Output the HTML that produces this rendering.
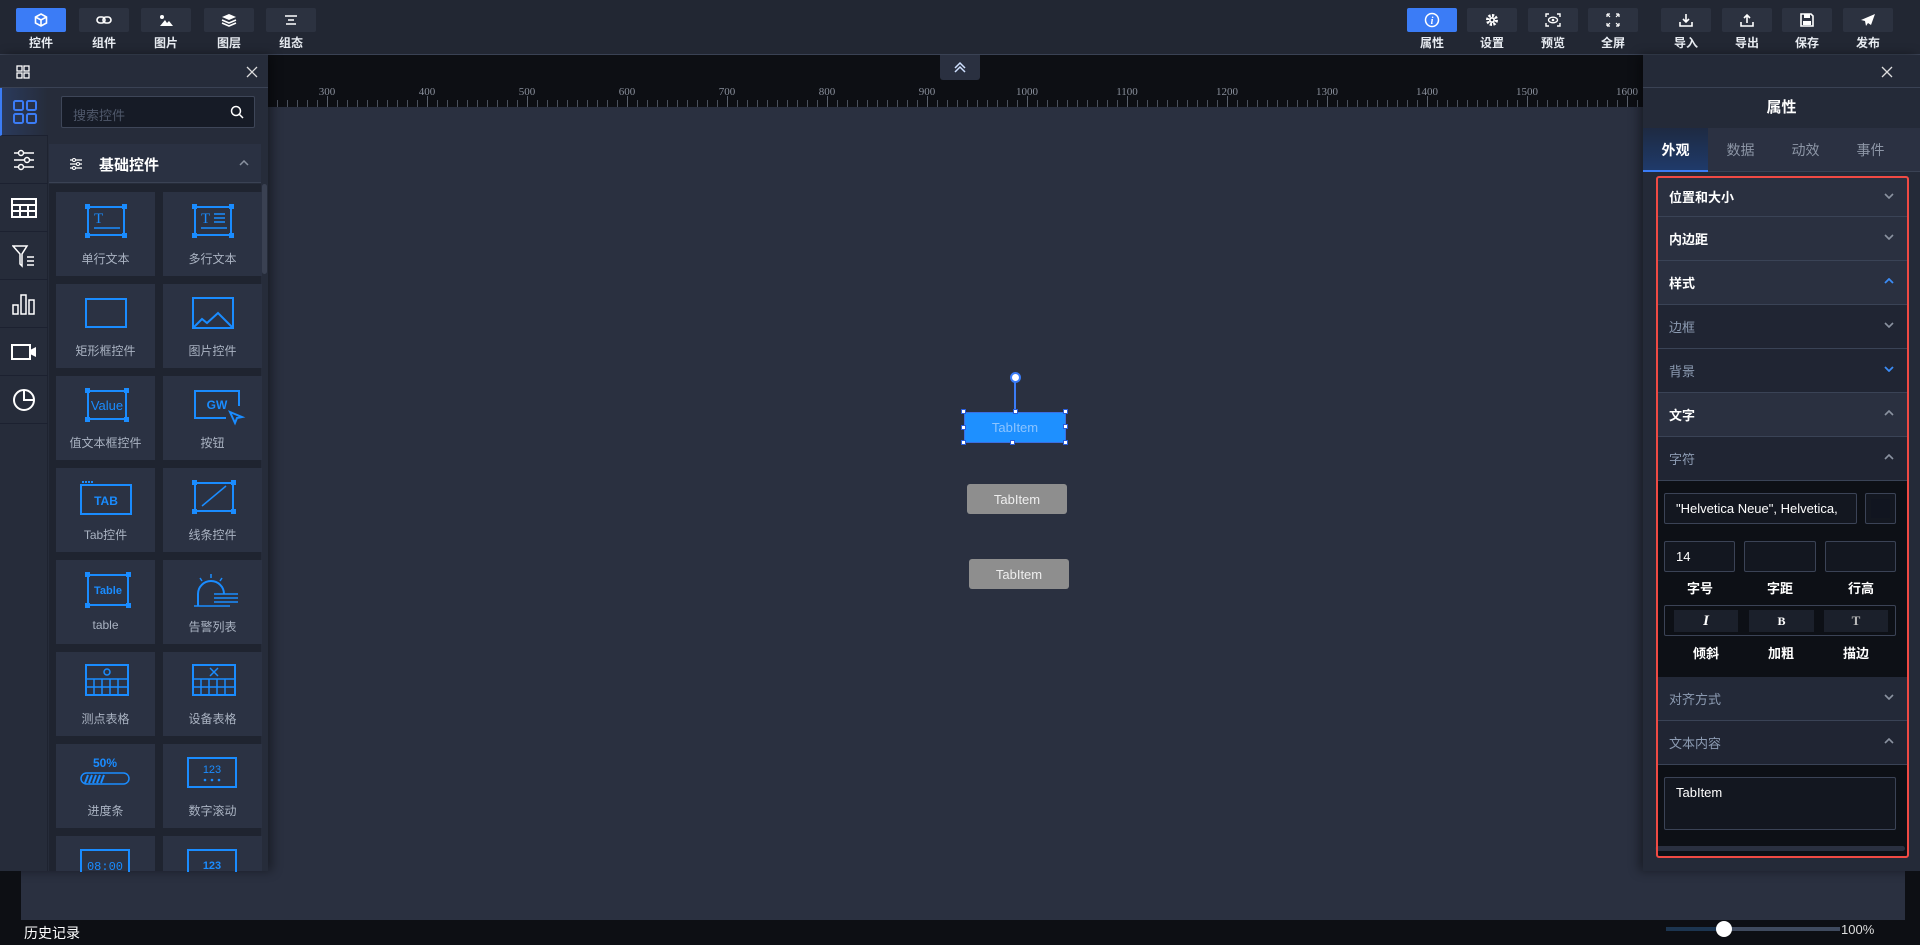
<!DOCTYPE html>
<html><head><meta charset="utf-8"><style>
*{box-sizing:border-box;margin:0;padding:0}
body{width:1920px;height:945px;overflow:hidden;background:#0d0f15;font-family:"Liberation Sans","Noto Sans CJK SC",sans-serif;color:#fff;position:relative}
.abs{position:absolute}
.top{left:0;top:0;width:1920px;height:55px;background:#222733;border-bottom:1px solid #3a4254}
.tb{position:absolute;top:8px;width:50px;height:24px;background:#2c3240;border-radius:2px;display:flex;align-items:center;justify-content:center}
.tb.on{background:#3b7cf6}
.tl{position:absolute;top:34px;width:50px;text-align:center;font-size:12px;font-weight:bold;color:#e8ecf2}
.canvas{left:21px;top:107px;width:1884px;height:813px;background:#2a3040}
.ruler{left:268px;top:55px;width:1375px;height:52px;background:#0d0f14;overflow:hidden}
.ruler span{position:absolute;top:31px;font-family:"Liberation Serif",serif;font-size:11px;color:#8a909c;transform:translateX(-50%)}
.lp{left:0;top:55px;width:268px;height:816px;background:#262c3a;box-shadow:4px 0 10px rgba(0,0,0,.4)}
.icol{position:absolute;left:0;top:33px;width:48px;height:783px;background:#262c3a;border-right:1px solid #1e2330}
.irow{position:absolute;left:0;width:48px;height:48px;border-bottom:1px solid #1c2130;display:flex;align-items:center;justify-content:center}
.card{position:absolute;width:99px;height:84px;background:#2b3243;text-align:center}
.card .lb{position:absolute;left:0;right:0;top:58px;font-size:12px;color:#aab3c2}
.card svg{position:absolute;left:29px;top:12px}
.rp{left:1643px;top:55px;width:277px;height:816px;background:#242a38;box-shadow:-4px 0 10px rgba(0,0,0,.4)}
.row{position:absolute;left:1657px;width:251px;height:44px;border-bottom:1px solid #3a4356;font-size:13px;display:flex;align-items:center;padding-left:12px}
.row.b{background:#2a3040;font-weight:bold;color:#fff}
.row.s{background:#202533;color:#8c9bb2}
.chev{position:absolute;right:14px;top:17px}
.inp{position:absolute;background:#131720;border:1px solid #3b4356;border-radius:2px}
.lab{position:absolute;font-size:13px;font-weight:bold;width:72px;text-align:center}
.cv-btn{position:absolute;background:#8e8e8e;border-radius:3px;color:#eee;font-size:13px;display:flex;align-items:center;justify-content:center}
.h{position:absolute;width:5px;height:5px;background:#fff;border:1px solid #2a5dd8}
</style></head><body>
<div class="abs canvas"></div>
<div class="abs ruler">
<span style="left:59px">300</span><span style="left:159px">400</span><span style="left:259px">500</span><span style="left:359px">600</span><span style="left:459px">700</span><span style="left:559px">800</span><span style="left:659px">900</span><span style="left:759px">1000</span><span style="left:859px">1100</span><span style="left:959px">1200</span><span style="left:1059px">1300</span><span style="left:1159px">1400</span><span style="left:1259px">1500</span><span style="left:1359px">1600</span>
<div style="position:absolute;left:0;top:45px;width:1375px;height:7px;background:repeating-linear-gradient(90deg,transparent 0 9px,#4a505c 9px 10px)"></div>
<div style="position:absolute;left:0;top:41px;width:1375px;height:11px;background:repeating-linear-gradient(90deg,transparent 0 59px,#5a606c 59px 60px,transparent 60px 100px)"></div>
</div>
<div class="abs" style="left:940px;top:55px;width:40px;height:25px;background:#2a3040;border-radius:0 0 3px 3px;text-align:center"><svg width="16" height="14" style="margin-top:5px"><path d="M3 8l5-5 5 5M3 12l5-5 5 5" stroke="#cfe0ff" stroke-width="1.5" fill="none"/></svg></div>

<div class="abs" style="left:1014px;top:382px;width:2px;height:30px;background:#3b7cf6"></div>
<div class="abs" style="left:1010px;top:372px;width:11px;height:11px;border-radius:50%;background:#fff;border:2px solid #3b7cf6"></div>
<div class="abs" style="left:964px;top:412px;width:102px;height:31px;background:#1e90ff;border:1px solid #3b6ee0;color:#8cc4ff;font-size:13px;display:flex;align-items:center;justify-content:center">TabItem</div>
<div class="h" style="left:961px;top:409px"></div><div class="h" style="left:1013px;top:409px"></div><div class="h" style="left:1063px;top:409px"></div>
<div class="h" style="left:961px;top:425px"></div><div class="h" style="left:1063px;top:424px"></div>
<div class="h" style="left:961px;top:440px"></div><div class="h" style="left:1010px;top:440px"></div><div class="h" style="left:1063px;top:440px"></div>
<div class="cv-btn" style="left:967px;top:484px;width:100px;height:30px">TabItem</div>
<div class="cv-btn" style="left:969px;top:559px;width:100px;height:30px">TabItem</div>

<div class="abs top">
<div class="tb on" style="left:16px"><svg width="14" height="14" viewBox="0 0 14 14"><path d="M7 1l5.5 3v6L7 13 1.5 10V4zM1.5 4L7 7l5.5-3M7 7v6" stroke="#fff" stroke-width="1.6" fill="none"/></svg></div><div class="tl" style="left:16px">控件</div>
<div class="tb" style="left:79px"><svg width="16" height="10"><rect x="1" y="2" width="8" height="6" rx="3" stroke="#fff" stroke-width="1.6" fill="none"/><rect x="7" y="2" width="8" height="6" rx="3" stroke="#fff" stroke-width="1.6" fill="none"/></svg></div><div class="tl" style="left:79px">组件</div>
<div class="tb" style="left:141px"><svg width="14" height="12"><circle cx="3" cy="3" r="2" fill="#fff"/><path d="M1 12l5-6 2 3 2-2 4 5z" fill="#fff"/></svg></div><div class="tl" style="left:141px">图片</div>
<div class="tb" style="left:204px"><svg width="16" height="14"><path d="M8 1l7 3-7 3-7-3z" fill="#fff"/><path d="M1 7l7 3 7-3M1 10l7 3 7-3" stroke="#fff" stroke-width="1.5" fill="none"/></svg></div><div class="tl" style="left:204px">图层</div>
<div class="tb" style="left:266px"><svg width="14" height="10"><path d="M1 1h12M4 5h6M2 9h10" stroke="#fff" stroke-width="1.5"/></svg></div><div class="tl" style="left:266px">组态</div>

<div class="tb on" style="left:1407px"><svg width="16" height="16"><circle cx="8" cy="8" r="6.5" stroke="#fff" stroke-width="1.5" fill="none"/><text x="8" y="12" font-size="10" font-style="italic" font-weight="bold" fill="#fff" text-anchor="middle" font-family="Liberation Serif">i</text></svg></div><div class="tl" style="left:1407px">属性</div>
<div class="tb" style="left:1467px"><svg width="14" height="14"><circle cx="7" cy="7" r="4.5" fill="none" stroke="#fff" stroke-width="3" stroke-dasharray="2.2 1.3"/><circle cx="7" cy="7" r="3" fill="#fff"/><circle cx="7" cy="7" r="1.3" fill="#2c3240"/></svg></div><div class="tl" style="left:1467px">设置</div>
<div class="tb" style="left:1528px"><svg width="16" height="14"><path d="M1 4V1h3M12 1h3v3M15 10v3h-3M4 13H1v-3" stroke="#fff" stroke-width="1.4" fill="none"/><ellipse cx="8" cy="7" rx="4.5" ry="2.8" stroke="#fff" stroke-width="1.3" fill="none"/><circle cx="8" cy="7" r="1.3" fill="#fff"/></svg></div><div class="tl" style="left:1528px">预览</div>
<div class="tb" style="left:1588px"><svg width="14" height="14"><path d="M1 1l3 3M1 1h3M1 1v3M13 1l-3 3M13 1h-3M13 1v3M1 13l3-3M1 13h3M1 13v-3M13 13l-3-3M13 13h-3M13 13v-3" stroke="#fff" stroke-width="1.2" fill="none"/></svg></div><div class="tl" style="left:1588px">全屏</div>
<div class="tb" style="left:1661px"><svg width="14" height="14"><path d="M7 1v8M4 6l3 3 3-3M1 9v4h12V9" stroke="#fff" stroke-width="1.6" fill="none"/></svg></div><div class="tl" style="left:1661px">导入</div>
<div class="tb" style="left:1722px"><svg width="14" height="14"><path d="M7 10V2M4 5l3-3 3 3M1 9v4h12V9" stroke="#fff" stroke-width="1.6" fill="none"/></svg></div><div class="tl" style="left:1722px">导出</div>
<div class="tb" style="left:1782px"><svg width="14" height="14"><path d="M1 1h10l2 2v10H1z" stroke="#fff" stroke-width="1.6" fill="none"/><rect x="4" y="1" width="6" height="4" fill="#fff"/><rect x="3" y="8" width="8" height="4" fill="#fff"/></svg></div><div class="tl" style="left:1782px">保存</div>
<div class="tb" style="left:1843px"><svg width="16" height="14"><path d="M15 1L1 7l4 1 1 5 2-3 3 2z" fill="#fff"/></svg></div><div class="tl" style="left:1843px">发布</div>
</div>

<div class="abs lp">
<div style="position:absolute;left:0;top:0;width:268px;height:33px;border-bottom:1px solid #3a4254"></div>
<svg width="14" height="14" style="position:absolute;left:16px;top:10px"><rect x="1" y="1" width="5" height="5" stroke="#fff" fill="none" stroke-width="1.3"/><rect x="8" y="1" width="5" height="5" stroke="#fff" fill="none" stroke-width="1.3"/><rect x="1" y="8" width="5" height="5" stroke="#fff" fill="none" stroke-width="1.3"/><rect x="8" y="8" width="5" height="5" stroke="#fff" fill="none" stroke-width="1.3"/></svg>
<svg width="12" height="12" style="position:absolute;left:246px;top:11px"><path d="M1 1l10 10M11 1L1 11" stroke="#ddd" stroke-width="1.3"/></svg>
<div class="icol">
<div class="irow" style="top:0;background:linear-gradient(90deg,#2a3a5c,#262c3a);border-left:2px solid #3b7cf6"><svg width="24" height="24"><rect x="1" y="1" width="9" height="9" rx="1.5" stroke="#3b7cf6" stroke-width="2" fill="none"/><rect x="14" y="1" width="9" height="9" rx="1.5" stroke="#3b7cf6" stroke-width="2" fill="none"/><rect x="1" y="14" width="9" height="9" rx="1.5" stroke="#3b7cf6" stroke-width="2" fill="none"/><rect x="14" y="14" width="9" height="9" rx="1.5" stroke="#3b7cf6" stroke-width="2" fill="none"/></svg></div>
<div class="irow" style="top:48px"><svg width="22" height="22"><path d="M1 4h20M1 11h20M1 18h20" stroke="#fff" stroke-width="1.5"/><circle cx="8" cy="4" r="2.5" fill="#262c3a" stroke="#fff" stroke-width="1.5"/><circle cx="14" cy="11" r="2.5" fill="#262c3a" stroke="#fff" stroke-width="1.5"/><circle cx="8" cy="18" r="2.5" fill="#262c3a" stroke="#fff" stroke-width="1.5"/></svg></div>
<div class="irow" style="top:96px"><svg width="26" height="20"><rect x="1" y="1" width="24" height="18" stroke="#fff" stroke-width="2" fill="none"/><path d="M1 7h24M1 13h24M9 7v12M17 7v12" stroke="#fff" stroke-width="2"/></svg></div>
<div class="irow" style="top:144px"><svg width="24" height="24"><path d="M1 2h14l-5 8v12l-2-2V10z" stroke="#fff" stroke-width="1.5" fill="none"/><path d="M15 13h7M15 17h7M15 21h7" stroke="#fff" stroke-width="1.5"/></svg></div>
<div class="irow" style="top:192px"><svg width="24" height="22"><rect x="1" y="12" width="5" height="9" stroke="#fff" stroke-width="1.5" fill="none"/><rect x="9" y="2" width="5" height="19" stroke="#fff" stroke-width="1.5" fill="none"/><rect x="17" y="7" width="5" height="14" stroke="#fff" stroke-width="1.5" fill="none"/></svg></div>
<div class="irow" style="top:240px"><svg width="26" height="18"><rect x="1" y="2" width="18" height="14" stroke="#fff" stroke-width="2" fill="none"/><path d="M19 7l6-3v10l-6-3z" fill="#fff"/></svg></div>
<div class="irow" style="top:288px"><svg width="24" height="24"><circle cx="12" cy="12" r="10" stroke="#fff" stroke-width="2" fill="none"/><path d="M12 2v10h10" stroke="#fff" stroke-width="2" fill="none"/></svg></div>
</div>
<div style="position:absolute;left:61px;top:41px;width:194px;height:32px;background:#161b26;border:1px solid #3e4658;border-radius:2px;font-size:13px;color:#4f586a;padding:8px 11px">搜索控件
<svg width="14" height="14" style="position:absolute;right:10px;top:8px"><circle cx="6" cy="6" r="4.5" stroke="#fff" stroke-width="1.5" fill="none"/><path d="M9.5 9.5l3.5 3.5" stroke="#fff" stroke-width="1.5"/></svg></div>
<div style="position:absolute;left:49px;top:89px;width:212px;height:39px;background:#2a3142;border-bottom:1px solid #3a4254;font-size:15px;font-weight:bold;padding:10px 0 0 50px">基础控件
<svg width="14" height="12" style="position:absolute;left:20px;top:14px"><path d="M1 2h12M1 6h12M1 10h12" stroke="#fff" stroke-width="1.2"/><circle cx="5" cy="2" r="1.5" fill="#2a3142" stroke="#fff"/><circle cx="9" cy="6" r="1.5" fill="#2a3142" stroke="#fff"/><circle cx="5" cy="10" r="1.5" fill="#2a3142" stroke="#fff"/></svg>
<svg width="10" height="6" style="position:absolute;left:190px;top:16px"><path d="M1 5l4-4 4 4" stroke="#8a92a0" stroke-width="1.5" fill="none"/></svg></div>
<div style="position:absolute;left:49px;top:129px;width:212px;height:687px;background:#1f2430"></div>
<div style="position:absolute;left:262px;top:129px;width:5px;height:90px;background:#3a4152;border-radius:3px"></div>
</div>
<div class="card" style="left:56px;top:192px"><svg width="42" height="34"><rect x="3" y="3" width="36" height="28" stroke="#1a8cff" stroke-width="2" fill="none"/><rect x="0" y="0" width="5" height="5" fill="#1a8cff"/><rect x="37" y="0" width="5" height="5" fill="#1a8cff"/><rect x="0" y="29" width="5" height="5" fill="#1a8cff"/><rect x="37" y="29" width="5" height="5" fill="#1a8cff"/><text x="9" y="19" font-family="Liberation Serif" font-size="15" fill="#1a8cff">T</text><path d="M9 24h26" stroke="#1a8cff" stroke-width="1.5"/></svg><div class="lb">单行文本</div></div>
<div class="card" style="left:163px;top:192px"><svg width="42" height="34"><rect x="3" y="3" width="36" height="28" stroke="#1a8cff" stroke-width="2" fill="none"/><rect x="0" y="0" width="5" height="5" fill="#1a8cff"/><rect x="37" y="0" width="5" height="5" fill="#1a8cff"/><rect x="0" y="29" width="5" height="5" fill="#1a8cff"/><rect x="37" y="29" width="5" height="5" fill="#1a8cff"/><text x="9" y="19" font-family="Liberation Serif" font-size="15" fill="#1a8cff">T</text><path d="M22 10h11M22 14h11M22 18h11M9 24h26" stroke="#1a8cff" stroke-width="1.5"/></svg><div class="lb">多行文本</div></div>
<div class="card" style="left:56px;top:284px"><svg width="42" height="34"><rect x="1" y="3" width="40" height="28" stroke="#1a8cff" stroke-width="2" fill="none"/></svg><div class="lb">矩形框控件</div></div>
<div class="card" style="left:163px;top:284px"><svg width="42" height="34"><rect x="1" y="2" width="40" height="30" stroke="#1a8cff" stroke-width="2" fill="none"/><path d="M2 31l8-8 5 4 11-10 14 14" stroke="#1a8cff" stroke-width="2" fill="none"/></svg><div class="lb">图片控件</div></div>
<div class="card" style="left:56px;top:376px"><svg width="44" height="34"><rect x="3" y="3" width="38" height="28" stroke="#1a8cff" stroke-width="2" fill="none"/><rect x="0" y="0" width="5" height="5" fill="#1a8cff"/><rect x="39" y="0" width="5" height="5" fill="#1a8cff"/><rect x="0" y="29" width="5" height="5" fill="#1a8cff"/><rect x="39" y="29" width="5" height="5" fill="#1a8cff"/><text x="22" y="22" font-size="13" fill="#1a8cff" text-anchor="middle">Value</text></svg><div class="lb">值文本框控件</div></div>
<div class="card" style="left:163px;top:376px"><svg width="54" height="40"><path d="M34 30H3V3h44v15" stroke="#1a8cff" stroke-width="2" fill="none"/><text x="25" y="21" font-size="12" font-weight="bold" fill="#1a8cff" text-anchor="middle">GW</text><path d="M38 24l12 5-5 1-2 5z" stroke="#1a8cff" stroke-width="2" fill="none"/></svg><div class="lb">按钮</div></div>
<div class="card" style="left:56px;top:468px"><svg width="52" height="36" style="left:24px"><path d="M2 2h12" stroke="#1a8cff" stroke-width="2" stroke-dasharray="2 1"/><rect x="1" y="5" width="50" height="29" stroke="#1a8cff" stroke-width="2" fill="none"/><text x="26" y="25" font-size="12" font-weight="bold" fill="#1a8cff" text-anchor="middle">TAB</text></svg><div class="lb">Tab控件</div></div>
<div class="card" style="left:163px;top:468px"><svg width="44" height="34"><rect x="3" y="3" width="38" height="28" stroke="#1a8cff" stroke-width="2" fill="none"/><rect x="0" y="0" width="5" height="5" fill="#1a8cff"/><rect x="39" y="0" width="5" height="5" fill="#1a8cff"/><rect x="0" y="29" width="5" height="5" fill="#1a8cff"/><rect x="39" y="29" width="5" height="5" fill="#1a8cff"/><path d="M10 26l24-20" stroke="#1a8cff" stroke-width="1.5"/></svg><div class="lb">线条控件</div></div>
<div class="card" style="left:56px;top:560px"><svg width="46" height="36"><rect x="3" y="3" width="40" height="30" stroke="#1a8cff" stroke-width="2" fill="none"/><rect x="0" y="0" width="5" height="5" fill="#1a8cff"/><rect x="41" y="0" width="5" height="5" fill="#1a8cff"/><rect x="0" y="31" width="5" height="5" fill="#1a8cff"/><rect x="41" y="31" width="5" height="5" fill="#1a8cff"/><text x="23" y="22" font-size="11" font-weight="bold" fill="#1a8cff" text-anchor="middle">Table</text></svg><div class="lb">table</div></div>
<div class="card" style="left:163px;top:560px"><svg width="48" height="40"><path d="M6 34V22a13 13 0 0126 0" stroke="#1a8cff" stroke-width="2" fill="none"/><path d="M2 34h36M22 22h24M22 26h24M22 30h24M19 2v4M8 6l2 3M30 6l-2 3" stroke="#1a8cff" stroke-width="1.5"/></svg><div class="lb">告警列表</div></div>
<div class="card" style="left:56px;top:652px"><svg width="44" height="34"><rect x="1" y="1" width="42" height="30" stroke="#1a8cff" stroke-width="2" fill="none"/><path d="M1 15h42M1 23h42M9 15v16M17 15v16M25 15v16M33 15v16" stroke="#1a8cff" stroke-width="1.5"/><circle cx="22" cy="8" r="3" stroke="#1a8cff" stroke-width="1.5" fill="none"/></svg><div class="lb">测点表格</div></div>
<div class="card" style="left:163px;top:652px"><svg width="44" height="34"><rect x="1" y="1" width="42" height="30" stroke="#1a8cff" stroke-width="2" fill="none"/><path d="M1 15h42M1 23h42M9 15v16M17 15v16M25 15v16M33 15v16M18 4l8 8M26 4l-8 8" stroke="#1a8cff" stroke-width="1.5"/></svg><div class="lb">设备表格</div></div>
<div class="card" style="left:56px;top:744px"><svg width="52" height="36" style="left:23px"><text x="26" y="11" font-size="12" font-weight="bold" fill="#1a8cff" text-anchor="middle">50%</text><rect x="2" y="17" width="48" height="11" rx="5.5" stroke="#1a8cff" stroke-width="1.5" fill="none"/><path d="M6 27l3-8M10 27l3-8M14 27l3-8M18 27l3-8M22 27l3-8" stroke="#1a8cff" stroke-width="2"/></svg><div class="lb">进度条</div></div>
<div class="card" style="left:163px;top:744px"><svg width="52" height="36" style="left:23px"><rect x="2" y="2" width="48" height="29" stroke="#1a8cff" stroke-width="2" fill="none"/><text x="26" y="17" font-size="11" fill="#1a8cff" text-anchor="middle">123</text><circle cx="19" cy="24" r="1.3" fill="#1a8cff"/><circle cx="26" cy="24" r="1.3" fill="#1a8cff"/><circle cx="33" cy="24" r="1.3" fill="#1a8cff"/></svg><div class="lb">数字滚动</div></div>
<div class="card" style="left:56px;top:836px;height:35px"><svg width="52" height="24" style="left:23px"><rect x="2" y="2" width="48" height="30" stroke="#1a8cff" stroke-width="2" fill="none"/><text x="26" y="22" font-size="12" fill="#1a8cff" text-anchor="middle" font-family="Liberation Mono">08:00</text></svg></div>
<div class="card" style="left:163px;top:836px;height:35px"><svg width="52" height="24" style="left:23px"><rect x="2" y="2" width="48" height="30" stroke="#1a8cff" stroke-width="2" fill="none"/><text x="26" y="21" font-size="11" font-weight="bold" fill="#1a8cff" text-anchor="middle">123</text></svg></div>

<div class="abs rp">
<div style="position:absolute;left:0;top:0;width:277px;height:33px;border-bottom:1px solid #3a4254"></div>
<svg width="12" height="12" style="position:absolute;left:238px;top:11px"><path d="M1 1l10 10M11 1L1 11" stroke="#ddd" stroke-width="1.3"/></svg>
<div style="position:absolute;left:0;top:33px;width:277px;height:40px;text-align:center;font-size:15px;font-weight:bold;line-height:40px">属性</div>
<div style="position:absolute;left:0;top:73px;width:277px;height:44px;background:#2b3142;border-bottom:1px solid #3a4254;font-size:14px;color:#8d96a6">
<div style="position:absolute;left:0;top:0;width:65px;height:44px;background:linear-gradient(#1e2a42,#1f3a6a);border-bottom:2px solid #3b7cf6;color:#fff;font-weight:bold;text-align:center;line-height:44px">外观</div>
<div style="position:absolute;left:65px;width:65px;text-align:center;line-height:44px">数据</div>
<div style="position:absolute;left:130px;width:65px;text-align:center;line-height:44px">动效</div>
<div style="position:absolute;left:195px;width:65px;text-align:center;line-height:44px">事件</div>
</div>
</div>
<div class="row b" style="top:176px;height:41px">位置和大小<svg class="chev" width="10" height="6"><path d="M1 1l4 4 4-4" stroke="#8a92a0" stroke-width="1.6" fill="none"/></svg></div>
<div class="row b" style="top:217px">内边距<svg class="chev" width="10" height="6"><path d="M1 1l4 4 4-4" stroke="#8a92a0" stroke-width="1.6" fill="none"/></svg></div>
<div class="row b" style="top:261px">样式<svg class="chev" width="10" height="6"><path d="M1 5l4-4 4 4" stroke="#3b8cf6" stroke-width="1.8" fill="none"/></svg></div>
<div class="row s" style="top:305px">边框<svg class="chev" width="10" height="6"><path d="M1 1l4 4 4-4" stroke="#8a92a0" stroke-width="1.6" fill="none"/></svg></div>
<div class="row s" style="top:349px">背景<svg class="chev" width="10" height="6"><path d="M1 1l4 4 4-4" stroke="#3b8cf6" stroke-width="1.8" fill="none"/></svg></div>
<div class="row b" style="top:393px">文字<svg class="chev" width="10" height="6"><path d="M1 5l4-4 4 4" stroke="#8a92a0" stroke-width="1.6" fill="none"/></svg></div>
<div class="row s" style="top:437px">字符<svg class="chev" width="10" height="6"><path d="M1 5l4-4 4 4" stroke="#8a92a0" stroke-width="1.6" fill="none"/></svg></div>
<div class="abs" style="left:1657px;top:481px;width:251px;height:196px;background:#0d1016"></div>
<div class="inp" style="left:1664px;top:493px;width:193px;height:31px;font-size:13px;padding:7px 11px;white-space:nowrap;overflow:hidden">"Helvetica Neue", Helvetica,</div>
<div class="inp" style="left:1865px;top:493px;width:31px;height:31px"><div style="margin:5px;width:19px;height:19px;background:#111520"></div></div>
<div class="inp" style="left:1664px;top:541px;width:71px;height:31px;font-size:13px;padding:7px 11px">14</div>
<div class="inp" style="left:1744px;top:541px;width:72px;height:31px"></div>
<div class="inp" style="left:1825px;top:541px;width:71px;height:31px"></div>
<div class="lab" style="left:1664px;top:578px">字号</div><div class="lab" style="left:1744px;top:578px">字距</div><div class="lab" style="left:1825px;top:578px">行高</div>
<div class="inp" style="left:1664px;top:605px;width:232px;height:31px;background:#0d1016">
<div style="position:absolute;left:9px;top:4px;width:64px;height:22px;background:#1b202b;text-align:center;font:italic bold 15px 'Liberation Serif',serif;line-height:22px">I</div>
<div style="position:absolute;left:84px;top:4px;width:65px;height:22px;background:#1b202b;text-align:center;font:bold 12px 'Liberation Serif',serif;line-height:22px">B</div>
<div style="position:absolute;left:159px;top:4px;width:64px;height:22px;background:#1b202b;text-align:center;font:bold 13px 'Liberation Serif',serif;line-height:22px;color:#bbb">T</div>
</div>
<div class="lab" style="left:1670px;top:643px">倾斜</div><div class="lab" style="left:1745px;top:643px">加粗</div><div class="lab" style="left:1820px;top:643px">描边</div>
<div class="row s" style="top:677px;background:#232938">对齐方式<svg class="chev" width="10" height="6"><path d="M1 1l4 4 4-4" stroke="#8a92a0" stroke-width="1.6" fill="none"/></svg></div>
<div class="row s" style="top:721px">文本内容<svg class="chev" width="10" height="6"><path d="M1 5l4-4 4 4" stroke="#8a92a0" stroke-width="1.6" fill="none"/></svg></div>
<div class="abs" style="left:1657px;top:765px;width:251px;height:92px;background:#0d1016"></div>
<div class="inp" style="left:1664px;top:777px;width:232px;height:53px;font-size:13px;padding:7px 11px">TabItem</div>
<div class="abs" style="left:1655px;top:846px;width:250px;height:5px;background:#2a3040;border-radius:3px"></div>
<div class="abs" style="left:1656px;top:176px;width:253px;height:682px;border:2px solid #f04a44;border-radius:3px"></div>

<div class="abs" style="left:0;top:920px;width:1920px;height:25px;background:#0d0f14"></div>
<div class="abs" style="left:0;top:871px;width:21px;height:74px;background:#0d0f14"></div>
<div class="abs" style="left:1905px;top:871px;width:15px;height:49px;background:#0d0f14"></div>
<div class="abs" style="left:24px;top:923px;font-size:14px">历史记录</div>
<div class="abs" style="left:1666px;top:927px;width:174px;height:4px;background:#3f4a5e"></div>
<div class="abs" style="left:1666px;top:927px;width:58px;height:4px;background:#1c3550"></div>
<div class="abs" style="left:1716px;top:921px;width:16px;height:16px;border-radius:50%;background:#fff"></div>
<div class="abs" style="left:1841px;top:922px;font-size:13px;color:#ddd">100%</div>
</body></html>
